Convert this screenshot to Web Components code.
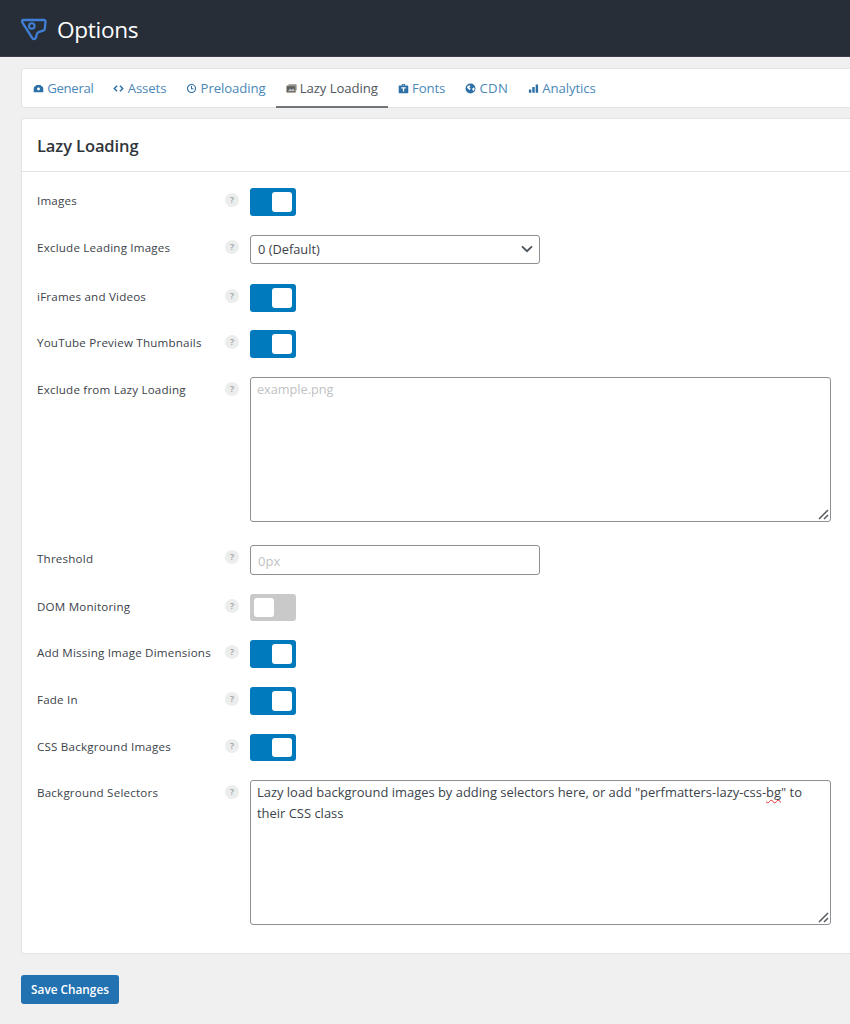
<!DOCTYPE html>
<html><head><meta charset="utf-8">
<style>
html,body{margin:0;padding:0;background:#f0f0f1;}
body{font-family:"Open Sans","Noto Sans",sans-serif;color:#3c434a;width:850px;height:1024px;overflow:hidden;}
</style></head>
<body>
<pm-header>Options</pm-header>
<pm-tabs>
 <pm-tab icon="gauge" style="--ls:-.32px">General</pm-tab>
 <pm-tab icon="code">Assets</pm-tab>
 <pm-tab icon="clock">Preloading</pm-tab>
 <pm-tab icon="image" active>Lazy Loading</pm-tab>
 <pm-tab icon="font">Fonts</pm-tab>
 <pm-tab icon="globe" style="--ls:.3px">CDN</pm-tab>
 <pm-tab icon="bars">Analytics</pm-tab>
</pm-tabs>
<pm-card heading="Lazy Loading">
 <pm-row label="Images"><pm-toggle on></pm-toggle></pm-row>
 <pm-row label="Exclude Leading Images"><pm-select>0 (Default)</pm-select></pm-row>
 <pm-row label="iFrames and Videos"><pm-toggle on></pm-toggle></pm-row>
 <pm-row label="YouTube Preview Thumbnails"><pm-toggle on></pm-toggle></pm-row>
 <pm-row label="Exclude from Lazy Loading"><pm-area placeholder>example.png</pm-area></pm-row>
 <pm-row label="Threshold" input><pm-input>0px</pm-input></pm-row>
 <pm-row label="DOM Monitoring"><pm-toggle></pm-toggle></pm-row>
 <pm-row label="Add Missing Image Dimensions"><pm-toggle on></pm-toggle></pm-row>
 <pm-row label="Fade In"><pm-toggle on></pm-toggle></pm-row>
 <pm-row label="CSS Background Images"><pm-toggle on></pm-toggle></pm-row>
 <pm-row label="Background Selectors"><pm-area>Lazy load background images by adding selectors here, or add "perfmatters-lazy-css-<pm-typo>bg</pm-typo>" to<br>their CSS class</pm-area></pm-row>
</pm-card>
<pm-save>Save Changes</pm-save>
<script>
const ICONS={
 gauge:'<path fill="currentColor" d="M.8 10V6.2C.8 4.4 2 3.4 3 3.3l.6-1.2h4.6l.7 1.2c1.2.1 2.3 1 2.3 2.9V10z"/><circle cx="6" cy="6.6" r="1.6" fill="#fff"/>',
 code:'<path fill="none" stroke="currentColor" stroke-width="1.6" d="M4.4 3 1.4 6l3 3M7.6 3l3 3-3 3"/>',
 clock:'<circle cx="6" cy="6" r="4.4" fill="none" stroke="currentColor" stroke-width="1.2"/><path fill="none" stroke="currentColor" stroke-width="1.1" d="M6 3.2V6.4h2.2"/>',
 image:'<rect x="2.6" y="1.4" width="9" height="6.6" rx=".8" fill="#8a8f94"/><rect x=".6" y="3" width="10" height="7.4" rx=".8" fill="#5a5f64" stroke="#b8a488" stroke-width=".8"/><path fill="#fff" d="M2 9l2.6-3 1.6 1.6L8 5.6 9.6 9z" opacity=".6"/>',
 font:'<path fill="currentColor" d="M4.2 1.2h3.6v1.4h2.6a.8.8 0 0 1 .8.8v7a.8.8 0 0 1-.8.8H1.6a.8.8 0 0 1-.8-.8v-7a.8.8 0 0 1 .8-.8h2.6zM5.2 2v.8h1.6V2z"/><path fill="#fff" d="M3.5 4.7h5V6H6.7v3.4H5.3V6H3.5z"/>',
 globe:'<circle cx="6" cy="6" r="5.4" fill="currentColor"/><path fill="#fff" d="M2.8 3.2 5 2.4l1 1.2-1.2 1.2 1.4 1.4L5 8 3.6 6.2 2.2 5.4zM8.2 5.4l1.8-.4.6 1.8-1.4 2-1.2-1.2z"/>',
 bars:'<path fill="currentColor" d="M1 7h2.6v3.6H1zM4.7 4.4h2.6v6.2H4.7zM8.4 1.6H11v9H8.4z"/>'
};
function def(name,css,html){
 customElements.define(name,class extends HTMLElement{
  connectedCallback(){
   if(this.shadowRoot)return;
   const r=this.attachShadow({mode:'open'});
   r.innerHTML='<style>'+css+'</style>'+(typeof html==='function'?html(this):html);
  }
 });
}
def('pm-header',`:host{display:flex;align-items:center;gap:10px;height:57px;background:#282e38;padding:3px 0 0 21px;border-bottom:1px solid #3a3f47;box-sizing:border-box;color:#fff;font-size:22.6px;letter-spacing:-.3px;font-family:"Open Sans",sans-serif}
svg{display:block;width:26px;height:24px}`,
`<svg viewBox="0 0 26 24"><path fill="none" stroke="#3f80d6" stroke-width="2.3" stroke-linejoin="round" d="M2.4 2H22.8c1.2 0 1.8.6 1.7 1.8l-.7 7c-.1 1-.6 1.6-1.6 1.9l-4 1.2c-1.4.4-2 1-2.4 2.4l-.9 3.4c-.5 1.6-2.6 2-3.6.5L1.3 4.4C.6 3 1.1 2 2.4 2z"/><circle cx="10.8" cy="8" r="2.8" fill="none" stroke="#3f80d6" stroke-width="2"/></svg><slot></slot>`);
def('pm-tabs',`:host{display:flex;margin:11px 0 0 21px;height:38px;background:#fff;border:1px solid #e4e4e6;border-right:0;border-radius:3px 0 0 3px;box-sizing:content-box;padding-left:1px;}`,`<slot></slot>`);
def('pm-tab',`:host{display:flex;align-items:center;gap:3.2px;padding:0 10px;height:38px;box-sizing:border-box;font-size:13.2px;color:#4b88b8;letter-spacing:var(--ls,-.1px);position:relative}
:host([active]){color:#50565c}
:host([active])::after{content:"";position:absolute;left:0;right:0;bottom:-1px;height:2px;background:#70757a}
svg{width:11px;height:11px;display:block;flex:none;color:#2c6fa6}`,
 el=>`<svg viewBox="0 0 12 12">${ICONS[el.getAttribute('icon')]}</svg><slot></slot>`);
def('pm-card',`:host{display:block;margin:10px 0 0 21px;background:#fff;border:1px solid #e4e4e6;border-right:0;border-radius:3px 0 0 3px;height:836px;box-sizing:border-box}
h2{margin:0;height:53px;box-sizing:border-box;padding:15px 0 0 15px;border-bottom:1px solid #e2e4e7;font-size:16.5px;line-height:24px;font-weight:600;color:#30353a;letter-spacing:-.1px;font-family:"Open Sans",sans-serif}
.b{display:flex;flex-direction:column;gap:18.9px;padding:16.4px 18px 0 15px}`,
 el=>`<h2>${el.getAttribute('heading')}</h2><div class="b"><slot></slot></div>`);
def('pm-row',`:host{display:flex;align-items:flex-start}
.l{width:188px;flex:none;font-size:11.6px;letter-spacing:.2px;color:#3c434a;line-height:16px;padding-top:5px;white-space:nowrap}
:host([input]) .l{padding-top:6px}
.h{width:14px;height:14px;flex:none;border-radius:50%;background:#eceded;color:#9a9d9f;font-size:9px;line-height:14px;text-align:center;margin:5px 11px 0 0;font-weight:600}
.c{flex:1;min-width:0}`,
 el=>`<div class="l">${el.getAttribute('label')}</div><div class="h">?</div><div class="c"><slot></slot></div>`);
def('pm-toggle',`:host{display:block;width:45.5px;height:27.7px;border-radius:3px;background:#c9c9c9;padding:4px;box-sizing:border-box}
:host([on]){background:#0079bd}
i{display:block;width:19.7px;height:19.7px;background:#fff;border-radius:3px}
:host([on]) i{margin-left:18px}`,`<i></i>`);
def('pm-select',`:host{display:flex;align-items:center;justify-content:space-between;width:290px;height:29px;box-sizing:border-box;border:1px solid #8c8f94;border-radius:3px;background:#fff;padding:0 6px 0 7px;font-size:12.8px;color:#3c434a;margin-bottom:1px}
svg{width:12px;height:8px;display:block}`,`<slot></slot><svg viewBox="0 0 12 8"><path d="M1 1.4 6 6.2l5-4.8" fill="none" stroke="#50575e" stroke-width="2"/></svg>`);
def('pm-input',`:host{display:block;width:290px;height:30px;box-sizing:border-box;border:1px solid #8c8f94;border-radius:3px;background:#fff;padding:1px 7px 0;font-size:13px;line-height:29px;color:#c0c2c4;}`,`<slot></slot>`);
def('pm-area',`:host{display:block;position:relative;width:581px;height:145px;box-sizing:border-box;border:1px solid #8c8f94;border-radius:3px;background:#fff;padding:1px 6px;font-size:12.95px;line-height:20.5px;color:#3c434a;margin-bottom:4px}
:host([placeholder]){color:#c0c2c4;font-size:12.7px}
svg{position:absolute;right:1px;bottom:1px;width:12px;height:12px}`,`<slot></slot><svg viewBox="0 0 12 12"><path d="M2 11 11 2M7 11l4-4" stroke="#55585c" stroke-width="1.5" fill="none"/></svg>`);
def('pm-typo',`:host{display:inline;text-decoration:underline wavy #e0312c 1px;text-decoration-skip-ink:none;text-underline-offset:2px}`,`<slot></slot>`);
def('pm-save',`:host{display:block;width:98px;height:29px;margin:21px 0 0 21px;box-sizing:border-box;background:#2271b1;border-radius:3px;color:#fff;font-size:11.8px;font-weight:600;line-height:29px;text-align:center}`,`<slot></slot>`);
</script>
</body></html>
